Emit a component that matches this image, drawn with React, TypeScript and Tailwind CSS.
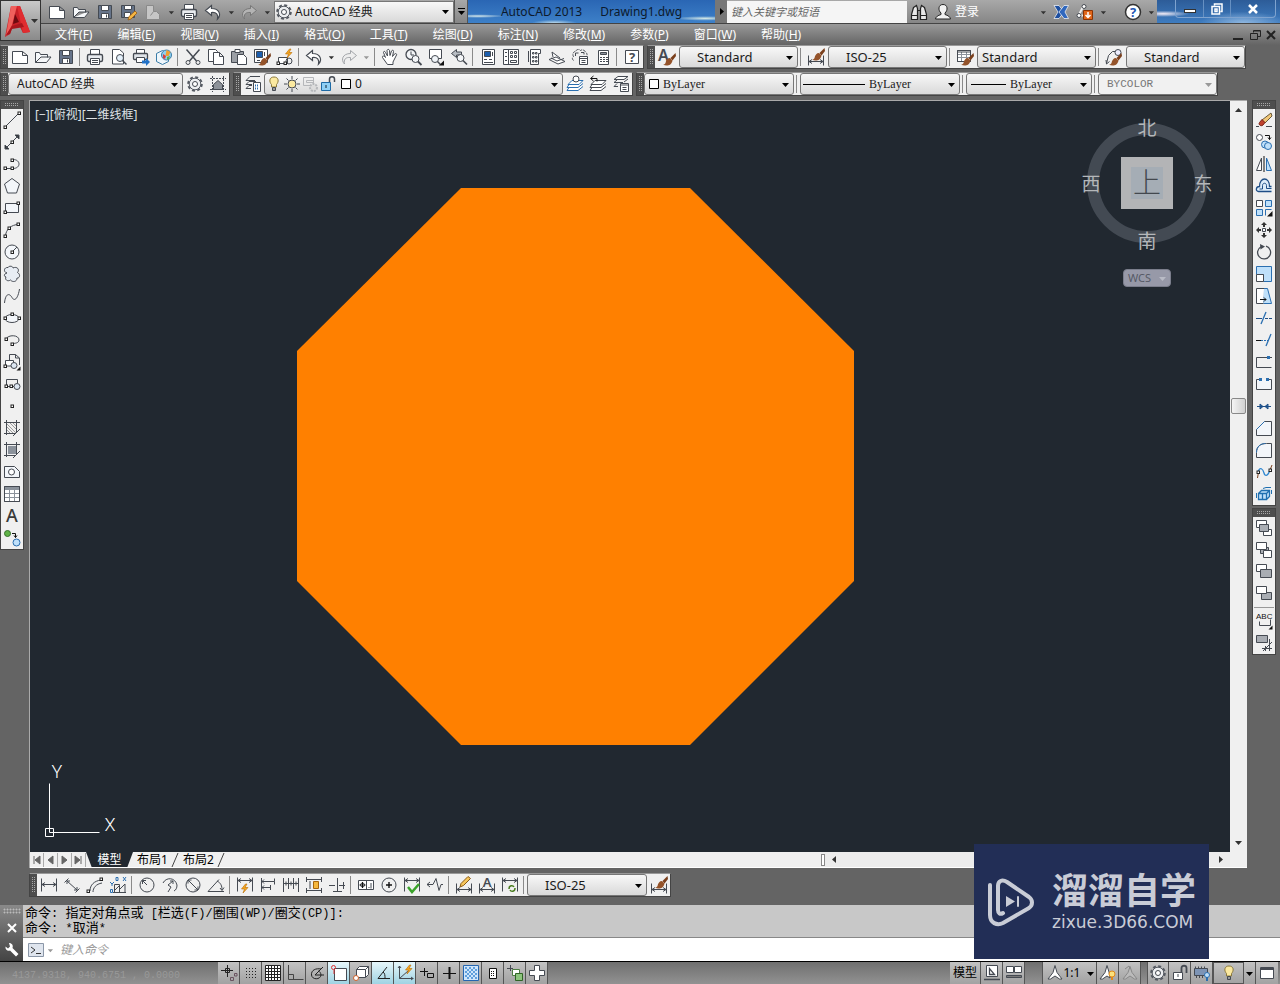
import type { ReactNode } from 'react'
import clsx from 'clsx'

const ink = '#454a52'
const blue = '#2b6fb0'
const sky = '#bfe0fa'

const dot = (x: number, y: number) => <rect x={x - 1} y={y - 1} width="2.5" height="2.5" fill="#fff" stroke="#222" />

const brush = (
  <g stroke="none">
    <path d="M17.500 2l-5 5 2 2.500L18 5z" fill="#7a3f1c" />
    <path d="M12 7c-2.500 0-4 2-4.500 5-.5 1-1.500 1.500-2.500 1.500 3 2 8.500 1.500 9.500-4z" fill="#94532a" />
  </g>
)
const bolt = <path d="M13.500 1l-4 5h3l-1.500 4 5-5.500h-3l2-3.500z" fill="#f6a821" stroke="#b86a00" strokeWidth=".6" />
const dimBase = <path d="M1.500 7.500v10M16.500 7.500v10M2 13.500h14M5 11.500l-3 2 3 2M13 11.500l3 2-3 2" />
const dimTop = <path d="M1.500 1.500v14M16.500 1.500v14M2 4.500h14M5 2.500l-3 2 3 2M13 2.500l3 2-3 2" />
const hatchFrame = <path d="M3.500 1v15M13.500 1v12M1 3.500h16M1 14.500h11M17 10l-7 7" />
const pageBack = <path d="M1.500 1.500h10v7h-10z" fill="#fff" />
const layers = <path d="M6 5.500h11l-4 4h-11zM3 9.500l-2 3h11l5-4M3 12.500l-2 3h11l5-4" fill="#fff" />

const icons: Record<string, ReactNode> = {
  new: <path d="M1.500 3.500h10l5 4v8h-15zM11.500 3.500v4h5" fill="#fff" />,
  open: <path d="M1.500 14.500v-10h4l1 2h7v3M1.500 14.500h11l4.500-5.500h-10z" fill="#f6f8fa" />,
  save: (
    <>
      <path d="M2.500 2.500h13v13h-13z" fill="#66748a" />
      <path d="M5.500 2.500h7v5h-7zM5.500 10.500h7v5h-7z" fill="#fff" />
      <path d="M10.500 11.500v3" />
    </>
  ),
  saveAs: (
    <>
      <path d="M1.500 2.500h13v12h-13z" fill="#66748a" />
      <path d="M4.500 2.500h7v4h-7zM4.500 9.500h6v5h-6z" fill="#fff" />
      <path d="M8 17l1-3.500 6-5.500 2 2-6 6z" fill="#f4b643" stroke="#9a5b12" strokeWidth=".8" />
    </>
  ),
  docOff: <path d="M2.500 2.500h7v6h3l3 3v5h-13zM9.500 8.500l-3 4" fill="#c6c6c6" stroke="#8a8a8a" />,
  print: (
    <>
      <path d="M4.500 7v-5.500h9v5.500" fill="#fff" />
      <rect x="1.500" y="6.500" width="15" height="7" rx="1.500" fill="#e8ebef" strokeWidth="1.400" />
      <path d="M4.500 10.500h9v6h-9z" fill="#fff" />
      <path d="M6 12.500h6M6 14.500h6" />
    </>
  ),
  preview: (
    <>
      <path d="M3.500 1.500h7l4 3.500v11h-11z" fill="#fff" />
      <circle cx="11" cy="10" r="3.500" fill="#e4f0fa" />
      <path d="M13.500 12.500l4 4" strokeWidth="1.500" />
    </>
  ),
  publish: (
    <>
      <path d="M4.500 6v-4.500h8v4.500" fill="#fff" />
      <rect x="1.500" y="5.500" width="14" height="6" rx="1" fill="#dfe3e8" strokeWidth="1.300" />
      <path d="M4.500 9.500h8v5h-8z" fill="#fff" />
      <path d="M10 12.500h4v-2.500l4 4-4 4v-2.500h-4z" fill="#2171c7" stroke="none" />
    </>
  ),
  globe: (
    <>
      <path d="M1.500 5.500l6-3 6 3v8l-6 3-6-3z" fill="#eef6fb" stroke="#3a7ca8" />
      <circle cx="11.500" cy="7" r="5" fill="#8fd0f0" stroke="#3a7ca8" />
      <path d="M11.500 2l4 2-2 4h-3z" fill="#f0a030" stroke="none" />
      <path d="M8 6l3 2-1 3-2-1z" fill="#d84040" stroke="none" />
      <path d="M12 9l3-1-1 3-2 1z" fill="#58b04a" stroke="none" />
    </>
  ),
  cut: (
    <>
      <path d="M2.500 1.500l10 11.500M15.500 1.500l-10 11.500" strokeWidth="1.500" />
      <circle cx="4" cy="14.500" r="2" />
      <circle cx="14" cy="14.500" r="2" />
    </>
  ),
  copy: (
    <>
      <path d="M1.500 1.500h7l2 2v10h-9z" fill="#fff" />
      <path d="M6.500 4.500h6l4 4v8h-10zM12.500 4.500v4h4" fill="#fff" />
    </>
  ),
  paste: (
    <>
      <path d="M1.500 3.500h12v11h-12z" fill="#9b9fa5" />
      <path d="M5 1.500h5v3h-5z" fill="#fff" />
      <path d="M7.500 6.500h6l3 3v7h-9z" fill="#fff" />
    </>
  ),
  match: (
    <>
      <path d="M1.500 1.500h13v13h-13z" fill="#fff" />
      <path d="M3.500 3.500h6v6h-6z" fill="#1d5fae" />
      <path d="M11.500 4v4M4 12.500h3" />
      <g transform="translate(0 3)">{brush}</g>
    </>
  ),
  blockEdit: (
    <>
      <path d="M2.500 15.500v-6h9v6z" fill="#fff" />
      <circle cx="13" cy="13" r="3" />
      {dot(2, 15)}
      {dot(9, 15)}
      {bolt}
    </>
  ),
  undo: <path d="M7.500 2.500l-6 5 6 5v-3c5-.500 7 2 6 6.500 4-4 2-10.500-6-10.500z" fill="#fff" strokeWidth="1.200" />,
  redo: <path d="M10.500 2.500l6 5-6 5v-3c-5-.500-7 2-6 6.500-4-4-2-10.500 6-10.500z" fill="#eee" stroke="#a3a6aa" />,
  redoDark: <path d="M10.500 2.500l6 5-6 5v-3c-5-.500-7 2-6 6.500-4-4-2-10.500 6-10.500z" fill="#b4b4b4" stroke="#777" />,
  pan: <path d="M6.500 16.500l-5-7c-.500-2 1.500-2 3 0l-2-5c0-1.500 1.500-1.500 2 0l2 3.500-.500-5.500c.500-1.500 2-1.500 2.500 0l.500 5 1.500-4.500c1-1.500 2.500-.500 2 .500l-1 5 2-2.500c1.500-1 2.500 0 2 1l-3.500 7v2.500z" fill="#fff" />,
  zoomRt: (
    <>
      <circle cx="7" cy="6.500" r="5" fill="#f4f6f8" strokeWidth="1.300" />
      <path d="M7 3.500v3.500h3" />
      <circle cx="11.500" cy="11" r="3.500" fill="#f4f6f8" />
      <path d="M14 13.500l3.500 3.500" strokeWidth="1.800" />
    </>
  ),
  zoomWin: (
    <>
      <path d="M2.500 1.500h12v9h-12z" fill="#fff" />
      <circle cx="8" cy="11" r="3.500" fill="#f0f4f8" />
      <path d="M10.500 13.500l3 3" strokeWidth="1.500" />
      <path d="M17 12.500v5h-5z" fill="#111" stroke="none" />
    </>
  ),
  zoomPrev: (
    <>
      <path d="M6.500 1.500l-5 4 5 4v-2.500h5v-3h-5z" fill="#b9bec4" />
      <circle cx="10.500" cy="10" r="3.500" fill="#f4f6f8" />
      <path d="M13 12.500l4 4" strokeWidth="1.600" />
    </>
  ),
  props: (
    <>
      <path d="M3.500 1.500h12v15h-12z" fill="#fff" />
      <path d="M5.500 3.500h6v5h-6z" fill="#1d5fae" />
      <path d="M5 11.500h3M5 14.500h9M10 11.500h3M13.500 4v4" />
    </>
  ),
  design: (
    <>
      <path d="M1.500 1.500h15v15h-15zM6.500 1.500v15" fill="#fff" />
      <path d="M3 4.500h2M3 8.500h2M3 12.500h2M8.500 3.500h2v2h-2zM12.500 3.500h2v2h-2zM8.500 7.500h2v2h-2zM12.500 7.500h2v2h-2zM8.500 12.500h6v2h-6z" />
    </>
  ),
  palettes: <path d="M5.500 1.500h10v4h-2v11h-8zM3.500 3v11M7.500 4.500h1.500v1.500h-1.500zM10.500 4.500h1.500v1.500h-1.500zM7.500 8.500h1.500v1.500h-1.500zM10.500 8.500h1.500v1.500h-1.500zM7.500 12.500h1.500v1.500h-1.500zM10.500 12.500h1.500v1.500h-1.500z" fill="#fff" />,
  sheets: <path d="M1 11.500l9 4.500 7-2.500-9-4.500zM3 10l6 3 7-2.500M5 9l-1-5 8 6" fill="#fff" />,
  markup: (
    <>
      <path d="M2.500 12.500c-2-2-1-4 0-4-1.500-2.500 0-5 2-5 1-2.500 4-2.500 5-1 2-1.500 5 0 5 2 1.500.500 2 2 1 3.500" strokeDasharray="3 1" />
      <path d="M4.500 8v-3h3M10 4.500h3v2" />
      <path d="M8.500 8.500h8v8h-8z" fill="#fff" />
      <path d="M8.500 10.500h8M10.500 12.500h4M10.500 14.500h4" />
    </>
  ),
  calc: (
    <>
      <path d="M4.500 2.500h10v14h-10z" fill="#fff" />
      <path d="M6.500 4.500h6v2h-6z" fill="#8b929b" />
      <path d="M6 9.500h8M6 11.500h8M6 13.500h8" strokeDasharray="2 1" />
    </>
  ),
  help: (
    <>
      <path d="M2.500 2.500h13v13h-13z" fill="#fff" />
      <text x="9" y="14" textAnchor="middle" fontSize="13" fontWeight="700" fontFamily="Noto Sans" fill={ink} stroke="none">?</text>
    </>
  ),
  textStyle: (
    <>
      <text x="0" y="13" fontSize="16" fontWeight="600" fontFamily="Noto Sans" fill={ink} stroke="none">A</text>
      <g transform="translate(0 3)">{brush}</g>
    </>
  ),
  dimStyle: (
    <>
      {dimBase}
      <g transform="translate(0 -2)">{brush}</g>
    </>
  ),
  tableStyle: (
    <>
      <path d="M1.500 2.500h13v11h-13z" fill="#fff" />
      <path d="M1.500 6.500h13M1.500 9.500h13M5.500 4v9M10.500 4v9" stroke="#8b929b" />
      <path d="M1.500 2.500h13v11h-13zM2 4h12" />
      <g transform="translate(0 3)">{brush}</g>
    </>
  ),
  leaderStyle: (
    <>
      <path d="M1.500 15.500l2-8 4-4h3M1 12l.5 4 3-2.500" />
      <circle cx="13" cy="4.500" r="3" fill="#eef" />
      <g transform="translate(-1 3)">{brush}</g>
    </>
  ),
  gear: (
    <>
      <circle cx="9" cy="9" r="6.800" strokeWidth="2" strokeDasharray="3 2.340" stroke="#555a62" />
      <circle cx="9" cy="9" r="5.800" fill="#eceef0" stroke="#555a62" />
      <circle cx="9" cy="9" r="2.500" fill="#fff" />
    </>
  ),
  myWorkspace: (
    <>
      <path d="M3.500 1v16M14.500 1v16M1 3.500h16M1 14.500h16" strokeDasharray="2 1" />
      <path d="M4.500 14.500v-5l4.500-4 4.500 4v5z" fill="#8d9299" />
    </>
  ),
  layerProps: (
    <>
      <path d="M6 1.500h10M2 5.500l4-4M2 5.500h9M2 9.500l3-3h7M2 9.500h6M2 13.500l3-3h3M2 13.500h5" />
      <path d="M9.500 7.500h7v9h-7z" fill="#fff" />
      <path d="M11 10.500h4M11 13.500h4" stroke={blue} strokeDasharray="1 1" strokeWidth="2" />
    </>
  ),
  bulb: (
    <>
      <path d="M9 2c-5 0-5 5-2.500 7.500v2.500h5v-2.500c2.500-2.500 2.500-7.500-2.500-7.500z" fill="#fbe9a0" stroke="#8c7a3c" />
      <path d="M7.500 12.500h3v3h-3z" fill="#999" />
    </>
  ),
  sun: (
    <>
      <path d="M9 1v3M9 14v3M1 9h3M14 9h3M3.500 3.500l2 2M12.500 12.500l2 2M14.500 3.500l-2 2M5.500 12.500l-2 2" />
      <circle cx="9" cy="9" r="4" fill="#fbe9a0" />
    </>
  ),
  freezeVp: (
    <g stroke="#b5b7ba">
      <path d="M2.500 2.500h10v8h-10zM5.500 5.500h7v2h-7z" />
      <circle cx="12.500" cy="12.500" r="3.500" fill="#ddd" strokeDasharray="2 1" strokeWidth="2" />
    </g>
  ),
  unlock: (
    <>
      <path d="M10.500 8v-4c0-3 5-3 5 0v3" strokeWidth="1.500" />
      <path d="M2.500 7.500h9v8h-9z" fill="#8fd0f5" stroke="#1d6aa5" />
      <path d="M7 10v3" stroke="#123" />
    </>
  ),
  swatch: <path d="M4.500 4.500h9v9h-9z" fill="#fff" stroke="#000" />,
  layerCurrent: (
    <>
      <g stroke={blue}>{layers}</g>
      <circle cx="10" cy="4" r="3" fill="#fff" />
    </>
  ),
  layerPrev: (
    <>
      {layers}
      <path d="M2 3.500h6v3M4.500 1l-3 2.500 3 2.500" stroke="#111" />
    </>
  ),
  layerStates: (
    <>
      <path d="M6 1.500h10l-4 3H2zM2 7.500l3-2.500M2 7.500h9M2 11.500l3-3M2 11.500h4M12 7l4-3" fill="#fff" />
      <path d="M8.500 8.500h8v8h-8z" fill="#fff" />
      <path d="M8.500 10h8M10.500 12.500h4M10.500 14.500h4" />
    </>
  ),

  line: <><path d="M3 15L15 3" />{dot(2, 16)}{dot(16, 2)}</>,
  xline: <><path d="M2 16L16 2M12 2h4v4zM2 12v4h4z" fill="#222" />{dot(9, 9)}</>,
  pline: <><path d="M2 13.500h8c8 0 8-9 0-9" />{dot(2, 13)}{dot(9, 13)}{dot(9, 5)}</>,
  polygon: <path d="M9 1.500l7.500 5.500-3 9h-9l-3-9z" fill="#f3f6fa" />,
  rect: <><path d="M2.500 4.500h13v9h-13z" fill="#f3f6fa" />{dot(2, 13)}{dot(15, 4)}</>,
  arc: <><path d="M2.500 15.500c0-7 6-12 13-12" />{dot(2, 15)}{dot(6, 7)}{dot(15, 3)}</>,
  circle: <><circle cx="9" cy="9" r="7" fill="#f3f6fa" /><path d="M9 9l5-5" />{dot(9, 9)}</>,
  cloud: <path d="M4 8c-4-1-3-6 1-5.500 1-2 5-1.500 5 .500 4-2 7 1.500 4.500 4.500 3.500 2 2 6-.500 5.500 0 4-4.500 4.500-6.500 2-3 2-6-.500-4.500-3-2.500-.500-2-3.500 1-4z" fill="#e8edf4" />,
  spline: <path d="M1.500 16c1-10 5-10 7.500-5.500s6 1 7.500-8.500" />,
  ellipse: <><ellipse cx="9" cy="9.500" rx="7" ry="4" fill="#f3f6fa" />{dot(2, 9)}{dot(16, 9)}{dot(9, 5)}</>,
  ellipseArc: <><path d="M3 8c2-4.500 13-4.500 13 1 0 3-4 3.500-7 3.500" />{dot(3, 8)}{dot(9, 13)}</>,
  insert: (
    <>
      <path d="M6.500 8v-6.500h6l4 3.500v7M12.500 1.500v3.500h4" />
      <path d="M2.500 13v-5.500h8v5.500z" fill="#fff" />
      <circle cx="11" cy="12.500" r="3" fill="#dde7f2" />
      {dot(2, 13)}
      <path d="M17.500 13.500v4h-4z" fill="#111" stroke="none" />
    </>
  ),
  block: <><path d="M3.500 11.500v-7h11v4M3.500 11.500h8" /><circle cx="14" cy="11.500" r="3" fill="#dde7f2" />{dot(3, 11)}{dot(8, 11)}</>,
  point: dot(9, 9),
  hatch: <><path d="M4 5l9 9M4 8l6 6M4 11l3 3M7 4l6 6M10 4l3 3" stroke="#888" strokeWidth=".8" />{hatchFrame}</>,
  gradient: <><path d="M5 5h8v8H5z" fill="#8b929b" stroke="none" />{hatchFrame}</>,
  region: <><path d="M1.500 3.500h10l5 5v6h-15z" fill="#f3f6fa" /><circle cx="8.500" cy="9" r="3" fill="#fff" /></>,
  table: (
    <>
      <path d="M1.500 1.500h15v15h-15z" fill="#fff" />
      <path d="M2 3.500h14" strokeWidth="3" stroke="#8b929b" />
      <path d="M2 8.500h14M2 12.500h14M6.500 5v11M11.500 5v11" stroke="#8b929b" />
      <path d="M1.500 1.500h15v15h-15z" />
    </>
  ),
  mtext: <text x="9" y="15" textAnchor="middle" fontSize="18" fontWeight="500" fontFamily="Noto Sans" fill="#3a3a3a" stroke="none">A</text>,
  addSelected: (
    <>
      <circle cx="4.500" cy="4.500" r="3" fill="#5fb347" stroke="#35702a" />
      <circle cx="13.500" cy="13.500" r="3.500" fill={sky} stroke={blue} />
      <path d="M9 4.500h3.500v4M11 6.500l1.500 2 1.500-2" stroke="#111" />
    </>
  ),

  erase: (
    <>
      <path d="M7 9l9-7 1 3-7 7z" fill="#f2c879" stroke="#6a5a3a" />
      <path d="M7 8.500l3 3-2 2.500c-2 2-5-.500-3.500-2.500z" fill="#c0412d" stroke="#7a2418" />
      <path d="M1 15.500h3M11 15.500h6" />
    </>
  ),
  copyObj: (
    <>
      <circle cx="4.500" cy="4.500" r="3" fill="#fff" />
      <circle cx="10" cy="11.500" r="3.500" fill={sky} stroke={blue} />
      <circle cx="13" cy="13" r="3.500" fill={sky} stroke={blue} />
      <path d="M10 2.500h4.500v4M13 4.500l1.500 2 1.500-2" stroke="#111" />
    </>
  ),
  mirror: <><path d="M6.500 3v12.500h-5z" fill="#fff" /><path d="M11.500 3v12.500h5z" fill={sky} stroke={blue} /><path d="M9 1v16" stroke="#111" /></>,
  offset: (
    <g stroke="#1f4e86">
      <path d="M16.500 14.500h-13c-3 0-3-5 1-5 0-10 10-10 10 0h2" fill="#dcecf9" strokeWidth="1.300" />
      <path d="M16.500 11.500h-5v-3c0-3-4-3-4 0v3.500h-3" />
    </g>
  ),
  array: (
    <>
      <path d="M1.500 1.500h6v6h-6z" fill="#fff" />
      <path d="M10.500 1.500h6v6h-6zM1.500 10.500h6v6h-6z" fill={sky} stroke={blue} />
      <path d="M10.500 16.500v-6h6" stroke={blue} />
      <path d="M17.500 12v5.500h-5.500z" fill="#111" stroke="none" />
    </>
  ),
  move: (
    <>
      <path d="M9 1l3 3h-2v2h-2v-2h-2zM9 17l3-3h-2v-2h-2v2h-2zM1 9l3-3v2h2v2h-2v2zM17 9l-3-3v2h-2v2h2v2z" fill="#333" stroke="none" />
      <path d="M7.500 7.500h3v3h-3z" fill="#fff" />
    </>
  ),
  rotate: <><path d="M11 3.200a6.500 6.500 0 1 1-5 .5" strokeWidth="1.300" /><path d="M5 1l5 2.500-4.500 3z" fill={ink} stroke="none" /></>,
  scale: <><path d="M1.500 1.500h15v15h-8v-7h-7z" fill={sky} stroke={blue} /><path d="M1.500 9.500h7v7h-7z" fill="#fff" /></>,
  stretch: <><path d="M8.500 1.500h4l4 15h-8z" fill={sky} stroke={blue} /><path d="M9 1.500h-7.500v15h7" fill="#fff" /><path d="M5 12.500h6M9 10.500l2 2-2 2" stroke="#111" /></>,
  trim: <><path d="M6 15l5-12" stroke={blue} strokeWidth="1.300" /><path d="M1 9.500h6" stroke="#1f4e86" /><path d="M10 9.500h7" stroke="#1f4e86" strokeDasharray="3 1" /></>,
  extend: <><path d="M11 15l5-12" stroke={blue} strokeWidth="1.300" /><path d="M1 9.500h5" stroke="#111" /><path d="M6 9.500h7" strokeDasharray="2 1" stroke={blue} /></>,
  breakPt: <><path d="M17 4.500H1.500v10h15" /><rect x="12" y="3" width="3" height="3" fill={blue} stroke="none" /></>,
  breakObj: <><path d="M5 4.500h-3.500v10h15v-10h-3.500" fill="#f3f6fa" /><rect x="4" y="3" width="3" height="3" fill={blue} stroke="none" /><rect x="11" y="3" width="3" height="3" fill={blue} stroke="none" /></>,
  join: <path d="M2 9.500h14M5 7l3 2.500-3 2.500zM13 7l-3 2.500 3 2.500z" stroke="#1f4e86" fill={blue} />,
  chamfer: <><path d="M1.500 16.500v-6l8-8h7v14z" fill="#f3f6fa" /><path d="M1.500 10.500l8-8" stroke={blue} /></>,
  fillet: <><path d="M1.500 16.500v-5c0-6 4-9 10-9h5v14z" fill="#f3f6fa" /><path d="M1.500 11.500c0-6 4-9 9-9" stroke={blue} /></>,
  blend: <><path d="M3 9c2-6 5-3 6 1s4 3 6-3" stroke="#2e86d0" strokeWidth="1.300" /><path d="M2.500 15l1-6M15 7l2-5" stroke="#7a3f1c" />{dot(3, 9)}{dot(15, 7)}</>,
  explode: (
    <g stroke="#1f6fb0">
      <path d="M3.500 8.500h8v6h-8zM3.500 8.500l3-3h8v6l-3 3M11.500 8.500l3-3M7.500 8.500v6" fill={sky} strokeWidth="1.300" />
      <path d="M8 3.500l3-1h5M1.500 8v5M16.500 5v4" />
    </g>
  ),
  toFront: <>{pageBack}<path d="M8.500 10.500h8v6h-8z" fill="#fff" /><path d="M4.500 5.500h9v7h-9z" fill="#a9adb3" /></>,
  toBack: <><path d="M5.500 6.500h8v6h-8z" fill="#a9adb3" />{pageBack}<path d="M8.500 9.500h8v7h-8z" fill="#fff" /></>,
  above: <>{pageBack}<path d="M5.500 6.500h11v8h-11z" fill="#a9adb3" /></>,
  under: <><path d="M6.500 7.500h10v7h-10z" fill="#a9adb3" />{pageBack}</>,
  textFront: (
    <>
      <text x="1" y="7" fontSize="8" fontFamily="Liberation Sans" fill="#111" stroke="none">ABC</text>
      <path d="M4.500 9.500v4h11v-6" />
      <path d="M17.500 13.500v4h-4z" fill="#111" stroke="none" />
    </>
  ),
  hatchBack: <><path d="M1.500 1.500h11v7h-11z" fill="#a9adb3" /><path d="M7 14.500h10M14.500 5v12M8 17l9-9M10.500 12v5" /></>,

  dimLinear: <path d="M1.500 2.500v13M16.500 2.500v13M2 8.500h14M5 6.500l-3 2 3 2M13 6.500l3 2-3 2" />,
  dimAligned: <path d="M1.500 6.500l4-4M12.500 16.500l4-4M4 5l10 9M4 8v-3h3M14 11v3h-3" />,
  dimArc: <><path d="M4 15c0-6 4-10 11-11M7 16c0-4 3-8 9-9" />{dot(2, 15)}{dot(15, 3)}</>,
  dimOrd: <><path d="M5.500 16.500v-8h5v8M4 16.500h13M11 13l5-5v8M6 14l4-4" /><path d="M1 6l2 2 2-2M3 8v2M14 1l3 4M17 1l-3 4M7 1.500h2v3h-2zM1.500 13.500h2v3h-2z" stroke={blue} /></>,
  dimRadius: <><circle cx="9" cy="9" r="7" /><path d="M9 9L4.500 4.500M4.500 8v-3.500h3.500" /></>,
  dimJogged: <path d="M2 7c3-6 12-6 14 2 0 3-1 5-3 6M7 16l3-5-3-2 5-4M9 5h3v3" />,
  dimDiameter: <><circle cx="9" cy="9" r="7" /><path d="M4 4l10 10M4 7.500v-3.500h3.500M14 10.500v3.500h-3.500" /></>,
  dimAngular: <path d="M17 15.500h-16l11-12M10 5c4 2 5 5 5 9M13 12l2 2.500 2-3" />,
  dimQuick: <>{dimTop}<g transform="translate(-4 7)">{bolt}</g></>,
  dimBaseline: <path d="M2.500 2v14M2.500 5.500h13v-3M2.500 11.500h9M11.500 9v5M5 9.500l-2 2 2 2M15.500 5.500v3M5 3.500l-2 2 2 2" />,
  dimContinue: <path d="M1.500 2v14M6.500 2v11M11.500 2v11M16.500 2v14M2 7.500h14M4 5.500v4M9 5.500v4M14 5.500v4" />,
  dimSpace: <><path d="M1.500 1v5M16.500 1v5M1.500 12v5M16.500 12v5M2 3.500h14M2 14.500h14M5 5v8" /><path d="M8.500 5.500h5v7h-5z" fill="#f6b73c" stroke="#a8660a" /></>,
  dimBreak: <path d="M1 9.500h6M11 9.500h6M9.500 2v14M15.500 6v7M5 15.500h9" />,
  tolerance: <><path d="M1.500 4.500h15v9h-15zM9.500 4.500v9M12 12v-1M14 7v5.500" fill="#fff" /><circle cx="5.500" cy="9" r="2" /><path d="M2.500 9h6M5.500 6v6" stroke="#111" /></>,
  centerMark: <><circle cx="9" cy="9" r="7" /><path d="M9 6v6M6 9h6" stroke="#111" strokeWidth="1.400" /></>,
  inspect: <>{dimTop}<path d="M5 11l4 5 7-8" stroke="#3aa32a" strokeWidth="2.500" /></>,
  jogLine: <path d="M1 8.500h6l3-6 3 12 2-6h2M4 6l-3 2.500 3 2.500" />,
  dimEdit: <>{dimBase}<path d="M5 11l1-3.500 7-7 2.500 2-7 7z" fill="#f7c65b" stroke="#8a5a14" /></>,
  dimTextEdit: <>{dimBase}<text x="9" y="11" textAnchor="middle" fontSize="13" fontWeight="600" fontFamily="Noto Sans" fill={ink} stroke="none">A</text></>,
  dimUpdate: <>{dimTop}<path d="M8 13c0-4 4-4 5-2M14 12c0 4-4 4-5 2" stroke="#4a7d20" strokeWidth="1.500" /></>,

  infer: <g stroke="#222"><path d="M1 6.500h12M7.500 1v12M5.500 4.500h4v4h-4z" /><path d="M10.500 13.500h3v3h-3zM14.500 9.500h2.500v2.500h-2.500z" stroke="#6a5360" /></g>,
  snap: <path d="M4 4.500h11M4 7.500h11M4 10.500h11M4 13.500h11" strokeDasharray="1 2" stroke="#222" strokeWidth="1.200" />,
  grid: <path d="M1.500 1.500h15v15h-15zM4.500 1.500v15M7.500 1.500v15M10.500 1.500v15M13.500 1.500v15M1.500 4.500h15M1.500 7.500h15M1.500 10.500h15M1.500 13.500h15" fill="#fff" stroke="#222" />,
  ortho: <path d="M2.500 1v14.500h15M2.500 10.500h5v5" stroke="#444" />,
  polar: <g stroke="#222"><path d="M15 3l-8 8h9M13 5c-5-1-10 1-9.500 6 .500 5 9 5 9.500 0-.200-2-1-3.500-3-4" /></g>,
  osnap: <><path d="M4.500 4.500h12v12h-12z" fill="#fff" /><circle cx="3.500" cy="3.500" r="2" stroke="#d33" /><path d="M4 6v4" stroke="#d33" /></>,
  osnap3d: <><path d="M4.500 5.500l3-3h9v8l-3 3h-9zM4.500 5.500h9v8M13.500 5.500l3-3" fill="#fff" /><circle cx="4" cy="14" r="2.500" fill="#fff" stroke="#d0622b" /></>,
  otrack: <path d="M13 3L4 14.500h12M9 8c2 1 2 4 2 6" stroke="#222" />,
  ducs: <><path d="M3.500 2v12.500h14M3.500 14.500l9-8M2 4l1.500-2 1.500 2M15 13l2 1.500-2 1.500" />{bolt}</>,
  dyn: <path d="M2 7.500h8M6.500 4v8M9.500 9.500h6v4h-6z" stroke="#111" />,
  lwt: <><path d="M3 9.500h13" stroke="#111" /><path d="M9.500 3v12" stroke="#111" strokeWidth="2" /></>,
  tpy: <><path d="M1.500 1.500h15v15h-15z" fill="#cfe5fa" stroke="#2566b0" /><path d="M3 4h12M3 8h12M3 12h12" strokeDasharray="2 2" stroke="#5f9fdc" strokeWidth="2" /><path d="M5 6h11M5 10h11M5 14h11" strokeDasharray="2 2" stroke="#5f9fdc" strokeWidth="2" /></>,
  qp: <><path d="M5.500 4.500h7v10h-7z" fill="#fff" stroke="#111" /><path d="M7 7.500h4M7 9.500h4M7 11.500h4" stroke="#111" strokeDasharray="1 1" /></>,
  sc: <><path d="M1 4.500h6M4.500 1v6" /><path d="M6.500 5.500h7v6h-7z" fill="#fff" stroke="#4d7d43" /><path d="M9.500 9.500h7v7h-7z" fill="#8cc47d" stroke="#2f6425" /></>,
  plus: <path d="M6.500 1.500h5v5h5v5h-5v5h-5v-5h-5v-5h5z" fill="#fff" />,
  modelTri: <><path d="M3.500 1.500h11v11h-11z" fill="#fff" /><path d="M6.500 4.500v6h5zM1 15.500h16" strokeWidth="1.300" /></>,
  layoutPair: <><path d="M1.500 2.500h7v6h-7zM9.500 2.500h7v6h-7z" fill="#fff" /><path d="M1.500 11.500h15v2h-15z" fill="#777" /></>,
  annoA: <path d="M9 1.500l-2 7-5 6.500h2.500l4.500-3 4.500 3h2.500l-5-6.500z" fill="#fff" />,
  annoSun: <><path d="M8 1.500l-2 7-5 6.500h2.500l4.500-3 3 2-1-6z" fill="#fff" /><circle cx="13" cy="10" r="3" fill="#fbe27c" stroke="#e08a1a" /><path d="M13 13v3" stroke="#e08a1a" strokeWidth="2" /></>,
  annoOff: <path d="M9 2.500l-2 6-5 6.500h2.500l4.500-3 4.500 3h2.500l-5-6.500zM4 5l4-3 1 3" fill="#bbb" stroke="#888" />,
  lockUi: <><path d="M10.500 8v-4c0-3 5-3 5 0v5" strokeWidth="1.800" /><path d="M2.500 8.500h9v7h-9z" fill="#fff" /><path d="M7 10v3" /></>,
  hardware: <><path d="M1.500 4.500h13v7h-13z" fill="#7d94b5" /><path d="M2 3.500h12M3 13h9" strokeDasharray="1 2" strokeWidth="2" /><circle cx="14" cy="11" r="2.500" fill="#bfe0fa" stroke={blue} /><path d="M14 13v4" stroke={blue} strokeWidth="2" /></>,
  clean: <><path d="M2.500 3.500h13v11h-13z" fill="#fff" /><path d="M3 5h12" strokeWidth="2" /></>,
  binoculars: (
    <>
      <path d="M3.500 4.500l3-2 1 3v11h-6v-5zM14.500 4.500l-3-2-1 3v11h6v-5z" fill="#e8e8e8" stroke="#222" strokeWidth="1.200" />
      <path d="M7.500 7.500h3M2 12.500h5M11 12.500h5" stroke="#222" />
    </>
  ),
  user: <path d="M9 1.500c-5 0-5 6-2 8.500v1.500c-3 1-5 2-5.500 4.500h15c-.500-2.500-2.500-3.500-5.500-4.500v-1.500c3-2.500 3-8.500-2-8.500z" fill="#f1f1f1" stroke="#222" />,
  exchange: <><path d="M2 2.500h5l5 6.500-5 6.500h-5l4-6.500z" fill="#1e4fa0" stroke="#fff" strokeWidth=".7" /><path d="M16.500 2.500h-4.500l-5 6.500 5 6.500h4.500l-3.500-6.500z" fill="#2f67bd" stroke="#fff" strokeWidth=".7" /></>,
  connect: <><path d="M7.500 3l-5 9.500h8" stroke="#eee" strokeWidth="2" /><circle cx="8" cy="3.500" r="2" fill="#fff" /><circle cx="3" cy="12.500" r="2" fill="#fff" /><path d="M7.500 7.500h9v9h-9z" fill="#e0661a" stroke="#8a3404" /><path d="M12 9v5M9.500 12l2.500 2.500 2.500-2.500" stroke="#fff" strokeWidth="1.500" /></>,
  helpRound: <><circle cx="9" cy="9" r="7.500" fill="#fff" stroke="#333" strokeWidth="1.500" /><text x="9" y="14" textAnchor="middle" fontSize="13" fontWeight="700" fontFamily="Noto Sans" fill="#2257b5" stroke="none">?</text></>,
}

function Icon({ name }: { name: string }) {
  return (
    <svg width="18" height="18" viewBox="0 0 18 18" fill="none" stroke={ink} className="shrink-0 overflow-visible" aria-hidden="true">
      {icons[name]}
    </svg>
  )
}

function Arrow({ dir = 'down', color = '#000' }: { dir?: 'down' | 'up' | 'left' | 'right'; color?: string }) {
  const paths = { down: 'M0 2h7l-3.500 4z', up: 'M0 5h7l-3.500-4z', left: 'M5 0v7l-4-3.500z', right: 'M2 0v7l4-3.500z' }
  return (
    <svg width="7" height="7" viewBox="0 0 7 7" className="shrink-0" aria-hidden="true">
      <path d={paths[dir]} fill={color} />
    </svg>
  )
}

function Tool({ name, className }: { name: string; className?: string }) {
  return (
    <button type="button" aria-label={name} className={clsx('flex h-[22px] shrink-0 items-center justify-center', className ?? 'w-[23px]')}>
      <Icon name={name} />
    </button>
  )
}

function Caret({ off }: { off?: boolean }) {
  return (
    <button type="button" aria-label="more" className="flex h-[22px] w-3 shrink-0 scale-75 items-center justify-center">
      <Arrow color={off ? '#999' : '#333'} />
    </button>
  )
}

const Sep = () => <div className="mx-[2px] h-[18px] w-[2px] shrink-0 border-l border-[#8a8a8a]" />

function Grip({ flat }: { flat?: boolean }) {
  return (
    <div className={clsx('flex shrink-0 items-center justify-center bg-[#4e4e4e]', flat ? 'h-2 w-full' : 'w-[7px] self-stretch')}>
      <div className={clsx('bg-[repeating-linear-gradient(90deg,#a8a8a8_0_1px,transparent_1px_2px)]', flat ? 'h-1 w-[14px]' : 'h-4 w-[3px]')}>
        <div className={clsx('bg-[repeating-linear-gradient(transparent_0_1px,#4e4e4e_1px_2px)]', flat ? 'h-1' : 'h-4')} />
      </div>
    </div>
  )
}

// Items are icon names; '|' is a divider, 'v' and 'V' are drop-down carets.
function Tools({ items }: { items: string[] }) {
  return items.map((item, i) => {
    if (item === '|') return <Sep key={i} />
    if (item === 'v' || item === 'V') return <Caret key={i} off={item === 'V'} />
    return <Tool key={i} name={item} />
  })
}

type ComboProps = { label: string; value: string; className: string; lead?: ReactNode; textClass?: string; disabled?: boolean }

function Combo({ label, value, className, lead, textClass, disabled }: ComboProps) {
  return (
    <label
      className={clsx(
        'flex h-[22px] shrink-0 items-center rounded-[3px] border border-[#777] pr-1',
        disabled ? 'bg-[#f1f1f1]' : 'bg-linear-to-b from-[#f8f8f8] to-[#d9d9d9]',
        className,
      )}
    >
      {lead}
      <select aria-label={label} disabled={disabled} className={clsx('min-w-0 flex-1 appearance-none bg-transparent leading-4 outline-none', textClass)}>
        <option>{value}</option>
      </select>
      <Arrow color={disabled ? '#999' : '#000'} />
    </label>
  )
}

function Bar({ children, className }: { children: ReactNode; className?: string }) {
  return <div className={clsx('flex h-6 shrink-0 items-center border border-[#444] border-t-[#999] bg-[#f0f0f0]', className)}>{children}</div>
}

const menus = [
  ['文件', 'F'],
  ['编辑', 'E'],
  ['视图', 'V'],
  ['插入', 'I'],
  ['格式', 'O'],
  ['工具', 'T'],
  ['绘图', 'D'],
  ['标注', 'N'],
  ['修改', 'M'],
  ['参数', 'P'],
  ['窗口', 'W'],
  ['帮助', 'H'],
]

function Header() {
  return (
    <header className="flex h-[45px]">
      <button type="button" aria-label="AutoCAD" className="flex h-[41px] w-[41px] shrink-0 items-center gap-px border border-[#333] bg-linear-to-b from-[#c9c9c9] to-[#8a8a8a] pl-1">
        <svg width="25" height="34" viewBox="0 0 25 34" aria-hidden="true">
          <path d="M6 2h9l10 26-7 1-3-6-8 1-2 6-5 3z" fill="#c61f26" />
          <path d="M6 2h6l-5 19-6 11z" fill="#f0605c" />
          <path d="M12 2h3l10 26-7 1z" fill="#e02c30" />
          <path d="M10 10l4 8-6 2z" fill="#6d0a10" />
          <path d="M1 31l6-9 10-3 2 4-12 2-2 5z" fill="#a8161d" />
        </svg>
        <Arrow color="#333" />
      </button>
      <div className="flex min-w-0 flex-1 flex-col">
        <div className="flex h-6 items-center border-b border-[#444] bg-linear-to-b from-[#a8a8a8] to-[#868686]">
          <div className="flex w-[233px] shrink-0 pl-1">
            {['new', 'open', 'save', 'saveAs', 'docOff', 'v', 'print', 'undo', 'v', 'redoDark', 'v'].map((n, i) =>
              n === 'v' ? <Caret key={i} /> : <Tool key={i} name={n} className="w-6" />,
            )}
          </div>
          <Combo label="工作空间" value="AutoCAD 经典" className="w-[180px] rounded-none" lead={<span className="mr-[2px]"><Icon name="gear" /></span>} />
          <button type="button" aria-label="自定义" className="flex h-full w-[14px] flex-col items-center justify-center border-x border-[#555]">
            <span className="h-px w-[7px] bg-black" />
            <Arrow />
          </button>
          <h1 className="flex h-full min-w-0 flex-1 items-center justify-center gap-[18px] bg-[radial-gradient(ellipse_at_4%_70%,#d6e8ea_0,transparent_8%),radial-gradient(ellipse_at_35%_100%,#bcd9ea_0,transparent_10%),radial-gradient(ellipse_at_96%_80%,#d4e8e6_0,transparent_9%),linear-gradient(#2a66b4,#3d80c8)] whitespace-nowrap text-[#0c1a2c]">
            <span>AutoCAD 2013</span>
            <span>Drawing1.dwg</span>
          </h1>
          <button type="button" aria-label="展开" className="flex h-full w-3 items-center justify-center bg-[#777]">
            <Arrow dir="right" />
          </button>
          <input aria-label="搜索" placeholder="键入关键字或短语" className="h-[22px] w-[180px] shrink-0 bg-[#f5f5f5] px-1 text-[11px] italic outline-none placeholder:text-[#666]" />
          <div className="flex w-[250px] shrink-0 items-center">
            <Tool name="binoculars" className="w-6" />
            <Tool name="user" className="w-6" />
            <button type="button" className="text-white">登录</button>
            <div className="ml-auto flex items-center">
              <Caret />
              <Tool name="exchange" className="w-6" />
              <Tool name="connect" className="w-6" />
              <Caret />
              <div className="w-3" />
              <Tool name="helpRound" className="w-6" />
              <Caret />
            </div>
          </div>
          <div className="flex h-full w-[123px] shrink-0 items-start justify-end bg-[radial-gradient(ellipse_at_5%_60%,#f3ecf6_0,transparent_16%),radial-gradient(ellipse_at_70%_100%,#8fb6de_0,transparent_35%),linear-gradient(#2d5c98,#3e7cc0)] pr-1">
            <div className="flex h-[18px] rounded-b border border-t-0 border-[#7fa3cf]">
              <button type="button" aria-label="最小化" className="flex w-[28px] items-end justify-center border-r border-[#6690c2] pb-1">
                <span className="h-1 w-3 border border-[#333] bg-white" />
              </button>
              <button type="button" aria-label="还原" className="flex w-[27px] items-center justify-center border-r border-[#6690c2]">
                <svg width="12" height="12" viewBox="0 0 12 12" fill="none" stroke="#fff" strokeWidth="1.500">
                  <path d="M3.500 2.500v-1.500h7.500v7.500h-1.500M1 3.500h7.500v7.500H1zM4 6h2v2.500H4z" />
                </svg>
              </button>
              <button type="button" aria-label="关闭" className="flex w-[44px] items-center justify-center">
                <svg width="12" height="10" viewBox="0 0 12 10" stroke="#fff" strokeWidth="2.500">
                  <path d="M2 1l8 8M10 1l-8 8" />
                </svg>
              </button>
            </div>
          </div>
        </div>
        <nav className="flex flex-1 items-center gap-[25px] bg-linear-to-b from-[#9a9a9a] to-[#646464] pl-[14px] text-white">
          {menus.map(([name, key]) => (
            <button key={key} type="button" className="leading-4 whitespace-nowrap">
              {name}(<u>{key}</u>)
            </button>
          ))}
          <div className="ml-auto flex items-center gap-1 pr-1">
            <button type="button" aria-label="最小化图形" className="flex h-3 w-3 items-end pb-px">
              <span className="h-[2px] w-[10px] bg-[#222]" />
            </button>
            <button type="button" aria-label="还原图形">
              <svg width="13" height="12" viewBox="0 0 13 12" fill="none" stroke="#222">
                <path d="M4.500 3.500v-2h7v6h-3M1.500 4.500h7v6h-7zM5 2h6" />
              </svg>
            </button>
            <button type="button" aria-label="关闭图形">
              <svg width="10" height="10" viewBox="0 0 10 10" stroke="#222" strokeWidth="2">
                <path d="M1 1l8 8M9 1l-8 8" />
              </svg>
            </button>
          </div>
        </nav>
      </div>
    </header>
  )
}

const standardTools = ['new', 'open', 'save', '|', 'print', 'preview', 'publish', 'globe', '|', 'cut', 'copy', 'paste', 'match', 'blockEdit', '|', 'undo', 'v', 'redo', 'V', '|', 'pan', 'zoomRt', 'zoomWin', 'zoomPrev', '|', 'props', 'design', 'palettes', 'sheets', 'markup', 'calc', '|', 'help']

const serif = 'font-[Liberation_Serif,Noto_Sans_CJK_SC,serif]'

function TopBars() {
  return (
    <div className="flex flex-col gap-[3px] pb-1">
      <div className="flex gap-[3px]">
        <Bar>
          <Grip />
          <Tools items={standardTools} />
        </Bar>
        <Bar>
          <Grip />
          <Tool name="textStyle" className="w-6" />
          <Combo label="文字样式" value="Standard" className="w-[119px]" textClass="pl-[17px] text-[13px]" />
          <Sep />
          <Tool name="dimStyle" className="w-6" />
          <Combo label="标注样式" value="ISO-25" className="w-[119px]" textClass="pl-[17px] text-[13px]" />
          <Sep />
          <Tool name="tableStyle" className="w-6" />
          <Combo label="表格样式" value="Standard" className="w-[119px]" textClass="pl-1 text-[13px]" />
          <Sep />
          <Tool name="leaderStyle" className="w-6" />
          <Combo label="引线样式" value="Standard" className="w-[119px]" textClass="pl-[17px] text-[13px]" />
        </Bar>
      </div>
      <div className="flex gap-[3px]">
        <Bar>
          <Grip />
          <Combo label="工作空间" value="AutoCAD 经典" className="w-[175px]" textClass="pl-2" />
          <Tools items={['gear', 'myWorkspace']} />
        </Bar>
        <Bar>
          <Grip />
          <Tool name="layerProps" />
          <Combo
            label="图层"
            value="0"
            className="w-[299px]"
            lead={
              <span className="flex">
                <Icon name="bulb" />
                <Icon name="sun" />
                <Icon name="freezeVp" />
                <Icon name="unlock" />
                <Icon name="swatch" />
              </span>
            }
          />
          <Tools items={['layerCurrent', 'layerPrev', 'layerStates']} />
        </Bar>
        <Bar>
          <Grip />
          <Combo label="颜色" value="ByLayer" className="w-[150px]" textClass={serif} lead={<Icon name="swatch" />} />
          <Sep />
          <Combo label="线型" value="ByLayer" className="w-[160px]" textClass={serif} lead={<span className="mr-1 ml-[2px] h-px w-[62px] bg-black" />} />
          <Sep />
          <Combo label="线宽" value="ByLayer" className="w-[126px]" textClass={serif} lead={<span className="mr-1 ml-1 h-px w-[35px] bg-black" />} />
          <Sep />
          <Combo label="打印样式" value="BYCOLOR" className="w-[119px]" textClass="pl-2 font-[Liberation_Mono,monospace] text-[11px] text-[#777]" disabled />
        </Bar>
      </div>
    </div>
  )
}

function SideBar({ groups }: { groups: string[][] }) {
  return (
    <div className="flex w-6 shrink-0 flex-col gap-[2px]">
      {groups.map((group, i) => (
        <div key={i} className="flex flex-col items-center border border-[#444] bg-[#f0f0f0]">
          <Grip flat />
          {group.map((name) =>
            name === '|' ? <hr key={name} className="my-[2px] w-5 border-[#999]" /> : <Tool key={name} name={name} className="w-[22px]" />,
          )}
        </div>
      ))}
    </div>
  )
}

const drawTools = ['line', 'xline', 'pline', 'polygon', 'rect', 'arc', 'circle', 'cloud', 'spline', 'ellipse', 'ellipseArc', 'insert', 'block', 'point', 'hatch', 'gradient', 'region', 'table', 'mtext', 'addSelected']
const modifyTools = ['erase', 'copyObj', 'mirror', 'offset', 'array', 'move', 'rotate', 'scale', 'stretch', 'trim', 'extend', 'breakPt', 'breakObj', 'join', 'chamfer', 'fillet', 'blend', 'explode']
const orderTools = ['toFront', 'toBack', 'above', 'under', '|', 'textFront', 'hatchBack']

function ViewCube() {
  return (
    <div className="absolute top-4 right-[17px] flex w-[132px] flex-col items-center gap-[18px]">
      <svg width="132" height="136" viewBox="0 0 132 136" fontFamily="Liberation Sans, Noto Sans CJK SC, sans-serif" className="-mb-[2px] overflow-visible">
        <circle cx="66" cy="66" r="54" fill="none" stroke="#434a53" strokeWidth="12" />
        <rect x="40" y="40" width="52" height="52" fill="#b3b4b6" />
        <rect x="50" y="50" width="32" height="32" fill="#a5adb5" />
        <text x="66" y="76" textAnchor="middle" fontSize="28" fontWeight="300" fill="#43484e">上</text>
        <g fontSize="19" textAnchor="middle" fill="#b4b7ba">
          <text x="66" y="18">北</text>
          <text x="10" y="74">西</text>
          <text x="122" y="74">东</text>
          <text x="66" y="131">南</text>
        </g>
      </svg>
      <button type="button" className="flex h-[18px] w-12 items-center justify-between rounded border border-[#7b7e8c] bg-[#9799a8] px-1 text-[11px] text-[#565a66]">
        WCS
        <Arrow color="#b9bbc6" />
      </button>
    </div>
  )
}

function Canvas() {
  return (
    <div className="relative min-h-[640px] min-w-0 flex-1 overflow-hidden bg-[#212830]">
      <p className="absolute top-[6px] left-[5px] leading-4 text-[#dfe3e6]">[−][俯视][二维线框]</p>
      <svg className="absolute top-[87px] left-[267px]" width="557" height="557" viewBox="0 0 557 557">
        <path d="M164 0h229l164 163v230L393 557H164L0 393V163z" fill="#ff8000" />
      </svg>
      <svg className="absolute bottom-2 left-[14px] overflow-visible" width="80" height="84" viewBox="0 0 80 84" fill="none" stroke="#fff" fontFamily="Roboto, sans-serif">
        <path d="M5.500 72.500v-49M5.500 72.500h50M1.500 68.500h8v8h-8z" />
        <g fill="#fff" stroke="none" fontSize="18" fontWeight="300" textAnchor="middle">
          <text x="13" y="18">Y</text>
          <text x="66" y="71">X</text>
        </g>
      </svg>
      <ViewCube />
    </div>
  )
}

function LayoutTabs() {
  return (
    <div className="flex h-4 items-center border-b border-white bg-[#f0f0f0]">
      {['M3 1v8M9 1v8l-5-4z', 'M8 1v8l-5-4z', 'M3 1v8l5-4z', 'M8 1v8M2 1v8l5-4z'].map((d) => (
        <button key={d} type="button" aria-label="翻页" className="flex h-[14px] w-[14px] items-center justify-center border-r border-[#aaa]">
          <svg width="11" height="10" viewBox="0 0 11 10" fill="#666" stroke="#666">
            <path d={d} />
          </svg>
        </button>
      ))}
      <button type="button" className="h-[15px] w-[47px] bg-[#212830] leading-[15px] text-white [clip-path:polygon(0_0,100%_0,88%_100%,12%_100%)]">模型</button>
      {['布局1', '布局2'].map((name) => (
        <button key={name} type="button" className="flex h-[15px] w-[46px] items-center justify-between leading-[15px] whitespace-nowrap text-black">
          <span className="pl-1">{name}</span>
          <svg width="8" height="14" viewBox="0 0 8 14" stroke="#444">
            <path d="M1 14L7 0" />
          </svg>
        </button>
      ))}
      <div className="ml-auto flex h-full w-[409px] items-center justify-between bg-[#ececec]">
        <div className="flex items-center gap-[6px]">
          <span className="h-3 w-1 border border-[#888] bg-white" />
          <Arrow dir="left" color="#333" />
        </div>
        <div className="pr-[6px]">
          <Arrow dir="right" color="#333" />
        </div>
      </div>
      <div className="h-full w-[17px]" />
    </div>
  )
}

const dimTools = ['dimLinear', 'dimAligned', 'dimArc', 'dimOrd', '|', 'dimRadius', 'dimJogged', 'dimDiameter', 'dimAngular', '|', 'dimQuick', 'dimBaseline', 'dimContinue', 'dimSpace', 'dimBreak', '|', 'tolerance', 'centerMark', 'inspect', 'jogLine', '|', 'dimEdit', 'dimTextEdit', 'dimUpdate', '|']

// Command history mixes a fixed-pitch Latin face with slightly larger Chinese glyphs.
function HistoryLine({ text }: { text: string }) {
  return (
    <p className="h-[15px] font-[Liberation_Mono,Noto_Sans_CJK_SC,monospace] leading-[15px] whitespace-pre">
      {text.split(/([\x20-\x7e]+)/).map((part, i) => (
        <span key={i} className={i % 2 ? 'text-[12px]' : 'text-[13px]'}>{part}</span>
      ))}
    </p>
  )
}

function CommandLine() {
  return (
    <div className="flex h-14 bg-[#c8c8c8] text-black">
      <div className="flex w-[23px] shrink-0 flex-col items-center justify-between bg-linear-to-b from-[#8a8a8a] to-[#444] py-[3px]">
        <div className="h-[6px] w-[18px] bg-[radial-gradient(#bbb_30%,transparent_60%)] bg-[size:3px_3px]" />
        <button type="button" aria-label="关闭命令行">
          <svg width="10" height="10" viewBox="0 0 10 10" stroke="#fff" strokeWidth="2">
            <path d="M1 1l8 8M9 1l-8 8" />
          </svg>
        </button>
        <button type="button" aria-label="自定义命令行">
          <svg width="16" height="16" viewBox="0 0 16 16" fill="#fff">
            <path d="M5 1c3 0 4.500 2.500 3.500 5l6 6-2.500 2.500-6-6C3.500 9.500 1 7.500 1.500 4.500l2.500 2 2-2z" />
          </svg>
        </button>
      </div>
      <div className="flex min-w-0 flex-1 flex-col">
        <div className="flex-1 overflow-hidden border-b border-[#888] pt-px pl-[2px]">
          <HistoryLine text="命令: 指定对角点或 [栏选(F)/圈围(WP)/圈交(CP)]:" />
          <HistoryLine text="命令: *取消*" />
        </div>
        <label className="flex h-[23px] items-center bg-white pl-[5px]">
          <svg width="16" height="14" viewBox="0 0 16 14" fill="none">
            <path d="M.5.5h15v13H.5z" fill="#dfe5ee" stroke="#8b97a8" />
            <path d="M3 4l4 3-4 3M8 10.500h5" stroke="#333" />
          </svg>
          <Caret off />
          <input aria-label="命令" placeholder="键入命令" className="ml-1 min-w-0 flex-1 italic outline-none placeholder:text-[#999]" />
        </label>
      </div>
    </div>
  )
}

const toggles = ['infer', 'snap', 'grid', 'ortho', 'polar', 'osnap', 'osnap3d', 'otrack', 'ducs', 'dyn', 'lwt', 'tpy', 'qp', 'sc', 'plus']
const activeToggles = ['osnap', 'otrack', 'ducs']
const cell = 'flex h-[22px] shrink-0 items-center justify-center border-r border-[#555]'

function StatusBar() {
  return (
    <footer className="flex h-[23px] items-center border-t border-black bg-linear-to-b from-[#6f6f6f] to-[#929292]">
      <p className="w-[218px] shrink-0 pt-1 pl-3 font-[Liberation_Mono,monospace] text-[10px] whitespace-pre text-[#999]">4137.9318, 940.6751 , 0.0000</p>
      {toggles.map((name) => (
        <button
          key={name}
          type="button"
          aria-label={name}
          aria-pressed={activeToggles.includes(name)}
          className={clsx(cell, 'w-[22px]', activeToggles.includes(name) ? 'bg-linear-to-b from-[#e6f6fa] to-[#9fd3e3]' : 'bg-linear-to-b from-[#c2c2c2] to-[#a2a2a2]')}
        >
          <Icon name={name} />
        </button>
      ))}
      <div className="ml-auto flex pr-[2px] text-black">
        <div className="flex bg-linear-to-b from-[#c2c2c2] to-[#a2a2a2]">
          <button type="button" className={clsx(cell, 'w-[31px]')}>模型</button>
          <Tool name="modelTri" className="w-[22px] border-r border-[#555]" />
          <Tool name="layoutPair" className="w-[22px] border-r border-[#555]" />
        </div>
        <div className="w-[17px]" />
        <div className="flex bg-linear-to-b from-[#c2c2c2] to-[#a2a2a2]">
          <label className={clsx(cell, 'w-[55px] border-l')}>
            <Icon name="annoA" />
            <select aria-label="注释比例" className="w-[23px] appearance-none bg-transparent outline-none">
              <option>1:1</option>
            </select>
            <Arrow />
          </label>
          <Tool name="annoSun" className="w-[22px] border-r border-[#555]" />
          <Tool name="annoOff" className="w-[22px] border-r border-[#555]" />
        </div>
        <div className="w-[6px]" />
        <div className="flex bg-linear-to-b from-[#c2c2c2] to-[#a2a2a2]">
          <Tool name="gear" className="w-[22px] border-x border-[#555]" />
          <Tool name="lockUi" className="w-[22px] border-r border-[#555]" />
          <Tool name="hardware" className="w-[22px] border-r border-[#555]" />
          <Tool name="bulb" className="w-[31px] border border-[#555]" />
          <button type="button" aria-label="状态栏菜单" className={clsx(cell, 'w-3')}>
            <Arrow />
          </button>
          <Tool name="clean" className="w-[22px]" />
        </div>
      </div>
    </footer>
  )
}

function Badge() {
  return (
    <div className="absolute right-[71px] bottom-[25px] flex h-[115px] w-[235px] items-center gap-[17px] bg-[#222e56] pl-[13px] text-[#c9ccd6]">
      <svg width="48" height="50" viewBox="0 0 48 50" fill="none" stroke="#c9ccd6" strokeWidth="4" strokeLinecap="round" strokeLinejoin="round" className="shrink-0">
        <path d="M3 8v30c0 8 7 11 13 8l26-15c4-3 4-8 0-11L20 5c-5-3-9-1-9 4v24c0 3 2 5 5 3" />
        <path d="M19 19v11l9-5.500z" fill="#c9ccd6" stroke="none" />
        <path d="M31 20v9" strokeWidth="2" />
      </svg>
      <div className="flex flex-col">
        <strong className="font-[Liberation_Sans,Noto_Sans_CJK_SC,sans-serif] text-[36px] leading-[41px] font-bold whitespace-nowrap">溜溜自学</strong>
        <span className="font-[DejaVu_Sans,sans-serif] text-[17px] leading-5">zixue.3D66.COM</span>
      </div>
    </div>
  )
}

export default function App() {
  return (
    <div className="relative flex min-h-screen flex-col bg-[#646464] font-[Noto_Sans,Noto_Sans_CJK_SC,sans-serif] text-[12px] text-[#1a1a1a]">
      <Header />
      <TopBars />
      <main className="flex flex-1">
        <SideBar groups={[drawTools]} />
        <section className="mx-[5px] flex min-w-0 flex-1 flex-col border-t border-l border-[#aaa]">
          <div className="flex flex-1">
            <Canvas />
            <div className="flex w-[17px] shrink-0 flex-col items-center bg-[#f0f0f0] py-[6px]">
              <Arrow dir="up" color="#333" />
              <span className="flex-2" />
              <span className="h-4 w-[15px] rounded-[2px] border border-[#888] bg-linear-to-r from-[#f5f5f5] to-[#d0d0d0]" />
              <span className="flex-3" />
              <Arrow color="#333" />
            </div>
          </div>
          <LayoutTabs />
        </section>
        <SideBar groups={[modifyTools, orderTools]} />
        <div className="w-1" />
      </main>
      <div className="flex pt-[5px] pb-2 pl-[29px]">
        <Bar>
          <Grip />
          <Tools items={dimTools} />
          <Combo label="标注样式" value="ISO-25" className="w-[120px]" textClass="pl-[17px] text-[13px]" />
          <Tool name="dimStyle" />
        </Bar>
      </div>
      <CommandLine />
      <StatusBar />
      <Badge />
    </div>
  )
}
